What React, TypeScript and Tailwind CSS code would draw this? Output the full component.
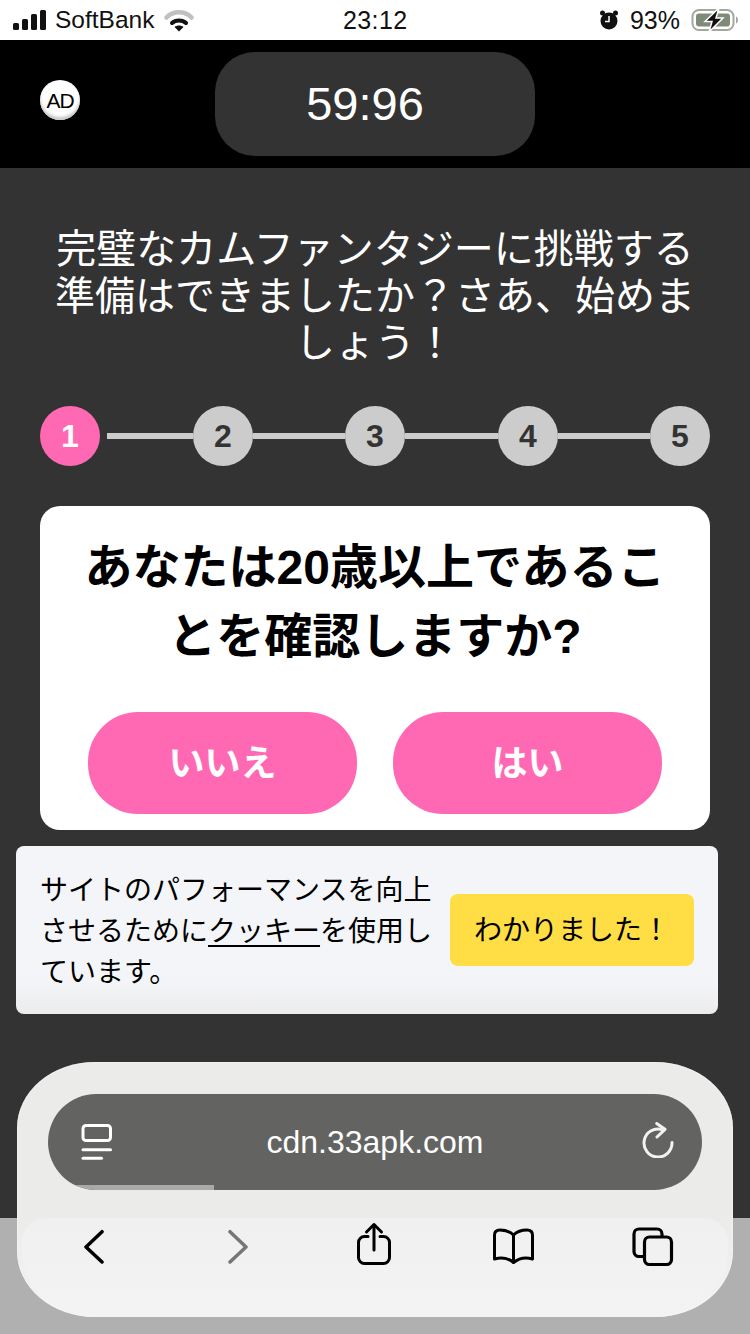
// Quiz landing page under iOS Safari chrome: status bar, timer header, stepper, question card, cookie bar, toolbar.
const FONT = "font-['Liberation_Sans','Noto_Sans_CJK_JP',sans-serif]";

function StatusBar() {
  return (
    <div className="relative flex h-10 items-center bg-white pl-[13px] pr-3 text-[25px] text-[#111]">
      <svg width="33" height="20" viewBox="0 0 33 20" fill="#111">
        <rect x="0" y="13" width="6" height="7" rx="1.5" />
        <rect x="9" y="9" width="6" height="11" rx="1.5" />
        <rect x="18" y="4" width="6" height="16" rx="1.5" />
        <rect x="27" y="0" width="6" height="20" rx="1.5" />
      </svg>
      <span className="ml-[9px] text-[24.5px] leading-none">SoftBank</span>
      <svg width="30" height="23" viewBox="0 0 30 23" className="ml-[10px]" fill="none">
        <path d="M2.500 8.500 C9 1.500 21 1.500 27.500 8.500" stroke="#c0c0c0" strokeWidth="4.500" strokeLinecap="round" />
        <path d="M8 14 C11.500 10.500 18.500 10.500 22 14" stroke="#111" strokeWidth="4" strokeLinecap="round" />
        <path d="M15 22.500 L10.500 18 C13 16 17 16 19.500 18 Z" fill="#111" />
      </svg>
      <span className="absolute left-[343px] font-medium leading-none tracking-[0.4px]">23:12</span>
      <div className="ml-auto flex items-center">
        <svg width="20" height="20" viewBox="0 0 20 20" fill="#111">
          <circle cx="10" cy="11" r="8.500" />
          <circle cx="3.500" cy="3" r="2.500" />
          <circle cx="16.500" cy="3" r="2.500" />
          <path d="M10 6v5.500h-4" stroke="#fff" strokeWidth="1.500" fill="none" />
        </svg>
        <span className="ml-[11px] leading-none">93%</span>
        <svg width="47" height="26" viewBox="0 0 47 26" className="ml-[11px]" fill="none">
          <rect x="1.500" y="3" width="41" height="20" rx="6.500" stroke="#a4a7a0" strokeWidth="2" />
          <rect x="5" y="6.500" width="34" height="13" rx="3" fill="#7f8b78" />
          <path d="M45 9.500c1.500.6 2 2 2 3.500s-.5 2.900-2 3.500z" fill="#a4a7a0" />
          <path d="M28 1 L14 14.500 H21 L18 25 L32 11 H25 Z" fill="#111" stroke="#fff" strokeWidth="1.500" />
        </svg>
      </div>
    </div>
  );
}

function TimerHeader() {
  return (
    <div className="relative flex h-32 justify-center bg-black pt-3">
      <div className="absolute left-10 top-10 flex size-10 items-center justify-center rounded-full bg-white text-[21px] leading-none tracking-[-1px] text-black shadow-[inset_0_-3px_3px_#c8c8c8]">
        AD
      </div>
      <div className="flex h-[104px] w-80 items-center justify-center rounded-[40px] bg-[#333] pr-5 text-[47px] text-white">
        59:96
      </div>
    </div>
  );
}

function StepCircle({ n, active }: { n: number; active?: boolean }) {
  return (
    <div
      className={`flex size-[60px] shrink-0 items-center justify-center rounded-full text-[32px] font-bold leading-none ${
        active ? 'bg-[#ff69b4] text-white' : 'bg-[#ccc] text-[#333]'
      }`}
    >
      {n}
    </div>
  );
}

function Stepper() {
  return (
    <div className="mx-10 mt-[39px] flex items-center">
      <StepCircle n={1} active />
      <div className="ml-[7px] h-1.5 w-[86px] bg-[#ccc]" />
      <StepCircle n={2} />
      <div className="h-1.5 w-[92px] bg-[#ccc]" />
      <StepCircle n={3} />
      <div className="h-1.5 w-[93px] bg-[#ccc]" />
      <StepCircle n={4} />
      <div className="h-1.5 w-[92px] bg-[#ccc]" />
      <StepCircle n={5} />
    </div>
  );
}

function QuestionCard() {
  return (
    <div className="mx-10 mt-10 h-[324px] rounded-[20px] bg-white px-12 pt-[27px]">
      <h2 className="-mx-1 text-center text-[48px] font-bold leading-[69px] text-black">
        あなたは20歳以上であることを確認しますか?
      </h2>
      <div className="mt-[41px] flex gap-9">
        <button className="h-[102px] flex-1 rounded-[50px] bg-[#ff69b4] pt-[1px] text-[36px] font-bold text-white">いいえ</button>
        <button className="h-[102px] flex-1 rounded-[50px] bg-[#ff69b4] pt-[1px] text-[36px] font-bold text-white">はい</button>
      </div>
    </div>
  );
}

function CookieBar() {
  return (
    <div className="mx-4 mt-4 flex h-[168px] w-[702px] items-center gap-4 rounded-lg bg-gradient-to-b from-[#f4f5f8] from-80% to-[#ececec] pl-6 pr-6 text-[28px] text-black">
      <p className="w-[394px] shrink-0 pt-[2px] leading-[41px]">
        サイトのパフォーマンスを向上させるために<span className="underline underline-offset-4">クッキー</span>を使用しています。
      </p>
      <button className="h-[72px] w-[244px] shrink-0 rounded-lg bg-[#ffdd44] pt-[2px] text-[28px] text-black">わかりました！</button>
    </div>
  );
}

function ReaderIcon() {
  return (
    <svg width="33" height="39" viewBox="0 0 33 39" fill="none" stroke="#fff" strokeWidth="3" strokeLinecap="round">
      <rect x="3" y="3.500" width="27.500" height="15" rx="3" />
      <path d="M3 27.700h27.500" />
      <path d="M3 36.300h18.500" />
    </svg>
  );
}

function ReloadIcon() {
  return (
    <svg width="32" height="36" viewBox="0 0 32 36" fill="none" stroke="#f2f2f2" strokeWidth="3" strokeLinecap="round" strokeLinejoin="round">
      <path d="M20 7.600 A14 14 0 1 0 30 20.500" />
      <path d="M14.700 1.500 L23 7.300 L15 15" />
    </svg>
  );
}

function Toolbar() {
  return (
    <div className="absolute left-[17px] top-[1062px] h-[255px] w-[716px] rounded-[78px/66px] bg-gradient-to-b from-[#ebebea] from-60% to-[#f3f3f3] px-[31px] pt-8 shadow-[inset_0_0_2px_#fff]">
      <div className="relative flex h-24 items-center justify-center overflow-hidden rounded-[48px] bg-[#636362] text-[32px] text-white">
        <span className="absolute left-8 top-[28px]">
          <ReaderIcon />
        </span>
        cdn.33apk.com
        <span className="absolute right-[28px] top-[28px]">
          <ReloadIcon />
        </span>
        <div className="absolute bottom-0 left-0 h-[5px] w-[166px] bg-[#a9a9a8]" />
      </div>
      <div className="-mx-[26px] mt-[28px] flex h-[99px] items-start rounded-[24px_24px_74px_74px/24px_24px_66px_66px] bg-gradient-to-b from-[#f0f0f0] to-[#f3f3f3] pl-[62px]">
        <svg width="20" height="36" viewBox="0 0 20 36" fill="none" stroke="#000" strokeWidth="3.500" strokeLinecap="round" strokeLinejoin="round" className="mt-[11px]">
          <path d="M18 2.700 L2 18 L18 33" />
        </svg>
        <svg width="20" height="36" viewBox="0 0 20 36" fill="none" stroke="#767676" strokeWidth="3.500" strokeLinecap="round" strokeLinejoin="round" className="ml-[124px] mt-[11px]">
          <path d="M2 2.700 L18 18 L2 33" />
        </svg>
        <svg width="36" height="45" viewBox="0 0 36 45" fill="none" stroke="#000" strokeWidth="3" strokeLinecap="round" strokeLinejoin="round" className="ml-[108px] mt-[4px]">
          <path d="M12 14.500H8.500a6 6 0 0 0-6 6v15a6 6 0 0 0 6 6h19a6 6 0 0 0 6-6v-15a6 6 0 0 0-6-6H24" />
          <path d="M18 3V28" />
          <path d="M10.500 10L18 2.500 25.500 10" />
        </svg>
        <svg width="44" height="38" viewBox="0 0 44 38" fill="none" stroke="#000" strokeWidth="3" strokeLinecap="round" strokeLinejoin="round" className="ml-[100px] mt-[9px]">
          <path d="M21.500 8C18 4.500 13 3 8 3 4 3 2.500 5 2.500 8V32C9 30 16 31 21.500 35.500 27 31 34 30 40.500 32V8C40.500 5 39 3 35 3 30 3 25 4.500 21.500 8Z" />
          <path d="M21.500 8V35" />
        </svg>
        <svg width="43" height="41" viewBox="0 0 43 41" fill="none" stroke="#000" strokeWidth="3.200" strokeLinejoin="round" className="ml-[95px] mt-[8px]">
          <path d="M12 30.500H8a5 5 0 0 1-5-5V8a5 5 0 0 1 5-5h18a5 5 0 0 1 5 5v2.500" />
          <rect x="13.500" y="11" width="27" height="27.500" rx="5" />
        </svg>
      </div>
    </div>
  );
}

export default function App() {
  return (
    <div className={`relative flex h-[1334px] w-[750px] flex-col overflow-hidden bg-[#333] ${FONT}`}>
      <StatusBar />
      <TimerHeader />
      <div className="h-[1050px] shrink-0 bg-[#333]">
        <h1 className="mx-10 mt-[58px] text-center text-[40px] leading-[47px] text-white">
          完璧なカムファンタジーに挑戦する準備はできましたか？さあ、始めましょう！
        </h1>
        <Stepper />
        <QuestionCard />
        <CookieBar />
      </div>
      <div className="flex-1 bg-[#b0b0b0]" />
      <Toolbar />
    </div>
  );
}
